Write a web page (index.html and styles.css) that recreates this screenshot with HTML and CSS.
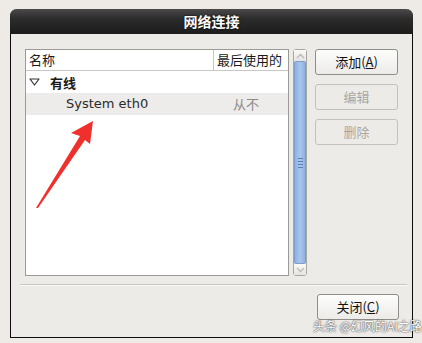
FILE: index.html
```html
<!DOCTYPE html>
<html>
<head>
<meta charset="utf-8">
<link rel="stylesheet" href="styles.css">
</head>
<body>
<div class="window">
  <div class="titlebar">网络连接</div>
  <div class="content">
    <div class="main">
      <div class="list">
        <div class="header">
          <div class="col-name">名称</div>
          <div class="col-used">最后使用的</div>
        </div>
        <div class="group">
          <svg class="tri" width="11" height="8" viewBox="0 0 11 8"><path d="M1 1 L10 1 L5.5 7 Z" fill="none" stroke="#333" stroke-width="1.2" stroke-linejoin="round"/></svg>
          <span>有线</span>
        </div>
        <div class="item">
          <div class="item-name">System eth0</div>
          <div class="item-used">从不</div>
        </div>
      </div>
      <div class="scrollbar">
        <div class="arrow up"><svg width="9" height="6" viewBox="0 0 9 6"><path d="M1 5 L4.5 1.5 L8 5" fill="none" stroke="#b9b9b9" stroke-width="1.3"/></svg></div>
        <div class="thumb">
          <div class="grip"><i></i><i></i><i></i><i></i></div>
        </div>
        <div class="arrow down"><svg width="9" height="6" viewBox="0 0 9 6"><path d="M1 1 L4.5 4.5 L8 1" fill="none" stroke="#b9b9b9" stroke-width="1.3"/></svg></div>
      </div>
      <div class="buttons">
        <div class="btn">添加(<u>A</u>)</div>
        <div class="btn disabled">编辑</div>
        <div class="btn disabled">删除</div>
      </div>
    </div>
    <div class="sep"></div>
    <div class="footer">
      <div class="btn close">关闭(<u>C</u>)</div>
    </div>
  </div>
</div>
<svg class="red-arrow" width="422" height="343" viewBox="0 0 422 343">
  <path d="M93 121 L71 133 L80 136 L36 208 L38 208 L85 140 L90 144 Z" fill="#f0302c"/>
</svg>
<div class="watermark">头条 @幻风的AI之路</div>
</body>
</html>
```
FILE: styles.css
```css
html, body {
  margin: 0;
  padding: 0;
}
body {
  width: 422px;
  height: 343px;
  background: #eeebe7;
  font-family: "Noto Sans CJK SC", "DejaVu Sans", sans-serif;
  font-size: 13px;
  color: #1a1a1a;
  position: relative;
  overflow: hidden;
}
.window {
  position: relative;
  margin: 9px 0 0 10px;
  width: 401px;
  height: 328px;
  border: 1px solid #0c0c0c;
  border-top: none;
  border-radius: 7px 7px 0 0;
  background: #edebe8;
  display: flex;
  flex-direction: column;
}
.titlebar {
  height: 25px;
  margin: 0 -1px;
  border-radius: 7px 7px 0 0;
  background: linear-gradient(#4a4a4a 0%, #2b2b2b 40%, #1c1c1c 100%);
  color: #fff;
  font-weight: bold;
  font-size: 14px;
  line-height: 25px;
  text-align: center;
  text-shadow: 0 0 2px #000;
}
.content {
  flex: 1;
  display: flex;
  flex-direction: column;
  padding: 15px 0 0 14px;
}
.main {
  display: flex;
  align-items: flex-start;
}
.list {
  width: 262px;
  height: 225px;
  border: 1px solid #9b9a97;
  background: #fff;
  display: flex;
  flex-direction: column;
}
.header {
  display: flex;
  height: 20px;
  border-bottom: 1px solid #c9c7c3;
  line-height: 20px;
}
.col-name {
  width: 184px;
  padding-left: 3px;
  border-right: 1px solid #c9c7c3;
}
.col-used {
  flex: 1;
  padding-left: 3px;
}
.group {
  display: flex;
  align-items: center;
  height: 22px;
  padding-left: 3px;
  font-weight: bold;
}
.tri {
  margin-right: 10px;
}
.item {
  display: flex;
  height: 22px;
  line-height: 22px;
  background: #edecea;
}
.item-name {
  width: 167px;
  padding-left: 40px;
  font-family: "DejaVu Sans", sans-serif;
  color: #2a2a2a;
}
.item-used {
  color: #8a8a8a;
}
.scrollbar {
  margin-left: 4px;
  width: 14px;
  height: 227px;
  display: flex;
  flex-direction: column;
  border: 1px solid #a8a6a2;
  border-radius: 3px;
  box-sizing: border-box;
  background: #e3e1dd;
}
.arrow {
  height: 11px;
  display: flex;
  align-items: center;
  justify-content: center;
  background: linear-gradient(#fafaf9, #e6e4e1);
}
.thumb {
  flex: 1;
  background: linear-gradient(90deg, #8fb1e0, #a9c6ee 50%, #8fb1e0);
  border: 1px solid #7e9ed0;
  border-radius: 2px;
  display: flex;
  align-items: center;
  justify-content: center;
}
.grip {
  display: flex;
  flex-direction: column;
  gap: 2px;
}
.grip i {
  display: block;
  width: 5px;
  height: 1px;
  background: #5b7fb5;
}
.buttons {
  margin-left: 8px;
  display: flex;
  flex-direction: column;
  gap: 9px;
}
.btn {
  width: 81px;
  height: 24px;
  border: 1px solid #8f8d89;
  border-radius: 3px;
  background: linear-gradient(#fdfdfc, #ecebe8);
  text-align: center;
  line-height: 24px;
  font-size: 13px;
  color: #111;
}
.btn.disabled {
  border-color: #c3c1bd;
  color: #a9a7a3;
  background: #edebe8;
}
.sep {
  margin: 8px 5px 0 -5px;
  height: 1px;
  background: #c8c6c2;
  border-bottom: 1px solid #fbfaf9;
}
.footer {
  display: flex;
  justify-content: flex-end;
  padding: 8px 13px 0 0;
}
.btn.close {
  width: 80px;
}
.red-arrow {
  position: absolute;
  left: 0;
  top: 0;
  pointer-events: none;
}
.watermark {
  position: absolute;
  left: 313px;
  top: 318px;
  font-size: 12px;
  line-height: 16px;
  color: #fff;
  text-shadow: 0 0 2px #555, 0 0 1px #333;
  white-space: nowrap;
}
```
